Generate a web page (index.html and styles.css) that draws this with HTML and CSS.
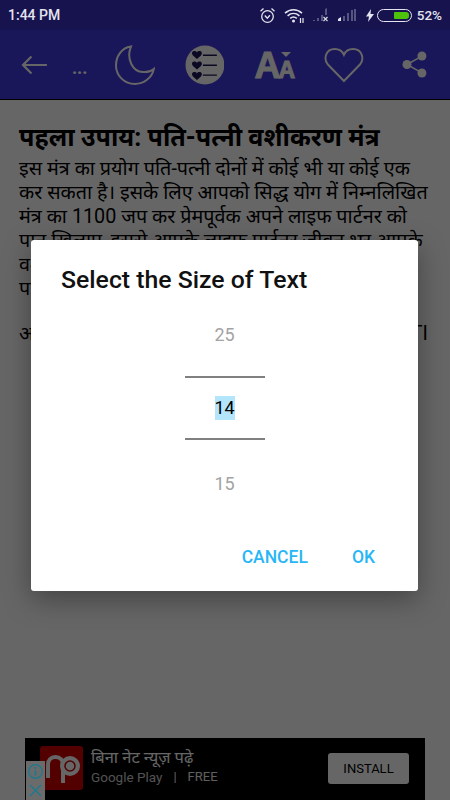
FILE: index.html
```html
<!DOCTYPE html>
<html lang="hi">
<head>
    <meta charset="UTF-8">
    <meta name="viewport" content="width=device-width, initial-scale=1.0">
    <title>Select the Size of Text</title>
    <link rel="stylesheet" href="styles.css">
</head>
<body>
    <div class="screen">
        <div class="status-bar">
            <span class="status-time">1:44 PM</span>
            <div class="status-icons">
                <svg class="icon-alarm" width="17" height="17" viewBox="0 0 17 17" fill="none" stroke="#e4e4ee" stroke-width="1.3">
                    <circle cx="8.5" cy="9.5" r="5.8"/>
                    <path d="M5.8 8.5l2.5 2.8 2.6-3M1.5 4.2L4.5 1.6M15.5 4.2l-3-2.6"/>
                </svg>
                <svg class="icon-wifi" width="21" height="15" viewBox="0 0 21 15" fill="none" stroke="#e4e4ee" stroke-width="1.6">
                    <path d="M1 5.2c5-4.6 12-4.6 17 0M3.6 7.8c3.500-3 8.300-3 11.800 0M6.200 10.300c2-1.600 4.600-1.600 6.600 0"/>
                    <circle cx="9.500" cy="13" r="1.500" fill="#e4e4ee" stroke="none"/>
                    <path d="M16.500 10v5M19 10v5" stroke-width="1.200"/>
                </svg>
                <svg class="icon-signal" width="18" height="14" viewBox="0 0 18 14">
                    <path d="M1 12h2v1H1zM5 10h2v3H5zM9 7h2v6H9zM13 1l2-1v7h-2z" fill="#55557f"/>
                    <path d="M11.500 9l4 4M15.500 9l-4 4" stroke="#d8d8e4" stroke-width="1.200"/>
                </svg>
                <svg class="icon-signal-two" width="20" height="14" viewBox="0 0 20 14">
                    <path d="M1 11l3-2v4H1z" fill="#e4e4ee"/>
                    <path d="M6 8h2v5H6zM10 5h2v8h-2zM14 2h2v11h-2zM17 1h2v12h-2z" fill="#55557f"/>
                </svg>
                <svg class="icon-bolt" width="8" height="13" viewBox="0 0 8 13">
                    <path d="M5 0L0 7.500h3L2 13l6-8H4.500z" fill="#e4e4ee"/>
                </svg>
                <div class="battery"><div class="battery-level"></div></div>
                <span class="status-percent">52%</span>
            </div>
        </div>

        <div class="toolbar">
            <svg width="30" height="24" viewBox="0 0 30 24" fill="none" stroke="#fff" stroke-width="2.200">
                <path d="M27 12H3M11.500 3.500L3 12l8.500 8.500"/>
            </svg>
            <span class="toolbar-dots">...</span>
            <svg class="icon-moon" width="40" height="40" viewBox="0 0 40 40" fill="none" stroke="#fff" stroke-width="2">
                <path d="M16 1.500C6 3 1 12 1 20.500 1 31 9.500 39 20 39c9 0 17-6 19-15-3 2.500-7 3.500-11 3C18 27 11 14 16 1.500z"/>
            </svg>
            <svg class="icon-list" width="40" height="40" viewBox="0 0 40 40">
                <circle cx="20" cy="20" r="19.500" fill="#fff"/>
                <g fill="#1a1656">
                    <path d="M12 14L8 10.500C6 8 7.500 6 9.500 6c1 0 2 .5 2.500 1.500C12.500 6.500 13.500 6 14.500 6c2 0 3.500 2 1.500 4.500z"/>
                    <path d="M12 24.500L8 21c-2-2.500-.5-4.500 1.500-4.500 1 0 2 .5 2.500 1.500.5-1 1.500-1.500 2.500-1.500 2 0 3.500 2 1.500 4.500z"/>
                    <path d="M12 35L8 31.500c-2-2.500-.5-4.500 1.500-4.500 1 0 2 .5 2.500 1.500.5-1 1.500-1.500 2.500-1.500 2 0 3.500 2 1.500 4.500z"/>
                    <path d="M18 9.500h14v1.400H18zM18 19.500h14v1.400H18zM18 29.500h14v1.400H18z"/>
                </g>
            </svg>
            <div class="icon-text-size">
                <span class="size-big">A</span><span class="size-small">A</span>
                <span class="size-arrow"></span>
            </div>
            <svg class="icon-heart" width="40" height="36" viewBox="0 0 41 37" fill="none" stroke="#fff" stroke-width="2">
                <path d="M20.500 35L4 18C-1 12 2 2 11 2c4.500 0 8 2.500 9.500 6C22 4.500 25.500 2 30 2c9 0 12 10 7 16z"/>
            </svg>
            <svg class="icon-share" width="25" height="27" viewBox="0 0 25 27" fill="#fff">
                <circle cx="20" cy="5" r="4.500"/>
                <circle cx="5" cy="13.500" r="4.500"/>
                <circle cx="20" cy="22" r="4.500"/>
                <path d="M5 13.500L20 5M5 13.500L20 22" stroke="#fff" stroke-width="1.500"/>
            </svg>
        </div>

        <div class="content">
            <h2 class="article-title">पहला उपाय: पति-पत्नी वशीकरण मंत्र</h2>
            <p class="article-text">इस मंत्र का प्रयोग पति-पत्नी दोनों में कोई भी या कोई एक<br>
            कर सकता है। इसके लिए आपको सिद्ध योग में निम्नलिखित<br>
            मंत्र का 1100 जप कर प्रेमपूर्वक अपने लाइफ पार्टनर को<br>
            पान खिलाए, इससे आपके लाइफ पार्टनर जीवन भर आपके<br>
            वश में रहेंगे और आपका वैवाहिक जीवन सुखी रहेगा और<br>
            पति-पत्नी में प्रेम बना रहेगा।</p>
            <p class="article-note"><span>अगर आप यह उपाय करना चाहते हैं</span><span>ARTI</span></p>
        </div>

        <div class="ad-banner">
            <svg class="ad-logo" width="43" height="44" viewBox="0 0 43 44">
                <rect width="43" height="44" rx="3" fill="#cc0000"/>
                <path d="M8 32V19c0-5 3-8 7.500-8S23 14 23 19v18" fill="none" stroke="#fff" stroke-width="4"/>
                <circle cx="30" cy="20" r="10" fill="#fff"/>
                <circle cx="30" cy="20" r="5" fill="none" stroke="#cc0000" stroke-width="1.500"/>
            </svg>
            <div class="ad-info">
                <div class="ad-title">बिना नेट न्यूज़ पढ़े</div>
                <div class="ad-store">
                    <span class="ad-play">Google Play</span>
                    <span class="ad-sep">|</span>
                    <span>FREE</span>
                </div>
            </div>
            <div class="ad-install">INSTALL</div>
        </div>

        <div class="scrim">
            <div class="dialog">
                <div class="dialog-title">Select the Size of Text</div>
                <div class="picker">
                    <div class="picker-item">25</div>
                    <div class="picker-current"><span class="picker-selected">14</span></div>
                    <div class="picker-item">15</div>
                </div>
                <div class="dialog-actions">
                    <span class="dialog-btn">CANCEL</span>
                    <span class="dialog-btn">OK</span>
                </div>
            </div>
        </div>

        <div class="ad-choices">
            <svg width="17" height="17" viewBox="0 0 17 17" fill="none" stroke="#1a7a90" stroke-width="1.300">
                <circle cx="8.500" cy="8.500" r="6.800"/>
                <path d="M8.500 7.500v5M8.500 4.200v1.800" stroke-width="1.800"/>
            </svg>
            <svg width="15" height="15" viewBox="0 0 15 15" fill="none" stroke="#1a7a90" stroke-width="1.400">
                <path d="M2 2l11 11M13 2L2 13"/>
            </svg>
        </div>
    </div>
</body>
</html>
```

FILE: styles.css
```css
* {
    box-sizing: border-box;
}

body {
    margin: 0;
    font-family: Roboto, "Noto Sans", sans-serif;
    background-color: #fff;
}

.screen {
    position: relative;
    width: 450px;
    height: 800px;
    overflow: hidden;
    display: flex;
    flex-direction: column;
}

.status-bar {
    height: 30px;
    flex-shrink: 0;
    padding: 0 8px;
    display: flex;
    align-items: center;
    justify-content: space-between;
    background-color: #17134f;
    color: #e4e4ee;
}

.status-time {
    font-size: 14px;
    font-weight: 500;
}

.status-icons {
    display: flex;
    align-items: center;
}

.status-percent {
    font-size: 13.5px;
    font-weight: 500;
    margin-left: 5px;
}

.icon-wifi {
    margin-left: 8px;
}

.icon-signal {
    margin-left: 7px;
}

.icon-signal-two {
    margin-left: 7px;
}

.icon-bolt {
    margin-left: 9px;
}

.battery {
    width: 35px;
    height: 13px;
    margin-left: 3px;
    padding: 2px;
    display: flex;
    justify-content: flex-end;
    border: 1.5px solid #e4e4ee;
    border-radius: 7px;
}

.battery-level {
    width: 15px;
    background-color: #4cc20a;
    border-radius: 1px 3px 3px 1px;
}

.toolbar {
    height: 70px;
    flex-shrink: 0;
    position: relative;
    display: flex;
    align-items: center;
    padding: 0 23px 0 20px;
    background-color: #4138e0;
    border-bottom: 1px solid #000;
}

.toolbar-dots {
    width: 43px;
    margin: 6px 0 0 22px;
    font-size: 18px;
    font-weight: 700;
    color: #fff;
}

.icon-list {
    margin-left: 30px;
}

.icon-text-size {
    position: relative;
    width: 40px;
    height: 40px;
    margin-left: 30px;
    font-family: "Liberation Sans", sans-serif;
    font-weight: 700;
    color: #fff;
    white-space: nowrap;
    -webkit-text-stroke: 1px #fff;
}

.size-big {
    position: absolute;
    left: 0;
    bottom: 1px;
    font-size: 36px;
    line-height: 36px;
}

.size-small {
    position: absolute;
    left: 24px;
    bottom: 3px;
    font-size: 23px;
    line-height: 23px;
}

.size-arrow {
    position: absolute;
    left: 27px;
    top: 7px;
    border-left: 5px solid transparent;
    border-right: 5px solid transparent;
    border-top: 5px solid #fff;
}

.icon-heart {
    margin-left: 30px;
}

.icon-share {
    margin-left: 38px;
}

.content {
    flex: 1;
    padding: 24px 19px 0;
    color: #000;
}

.article-title {
    margin: 0;
    font-size: 25.1px;
    line-height: 28px;
    font-weight: 700;
    white-space: nowrap;
}

.article-text {
    margin: 5px 0 0;
    font-size: 19.8px;
    line-height: 24px;
    white-space: nowrap;
}

.article-note {
    margin: 21px 3px 0 0;
    font-size: 19.8px;
    line-height: 24px;
    white-space: nowrap;
    display: flex;
    justify-content: space-between;
}

.ad-banner {
    width: 400px;
    height: 62px;
    flex-shrink: 0;
    margin-left: 25px;
    padding: 8px 16px 0 15px;
    display: flex;
    align-items: flex-start;
    background-color: #000;
}

.ad-logo {
    flex-shrink: 0;
}

.ad-info {
    flex: 1;
    margin-left: 8px;
}

.ad-title {
    margin-top: 2px;
    font-size: 16.5px;
    line-height: 20px;
    color: #fff;
}

.ad-store {
    display: flex;
    align-items: center;
    gap: 11px;
    font-size: 13px;
    line-height: 18px;
    color: #eee;
}

.ad-play {
    font-size: 13.5px;
    color: #ccc;
}

.ad-install {
    width: 81px;
    height: 31px;
    margin-top: 7px;
    display: flex;
    align-items: center;
    justify-content: center;
    background-color: #fff;
    border-radius: 3px;
    font-size: 13px;
    color: #000;
}

/* not dimmed like the rest of the ad, so it sits over the scrim */
.ad-choices {
    position: absolute;
    left: 26px;
    bottom: 0;
    width: 19px;
    height: 39px;
    padding-top: 2px;
    display: flex;
    flex-direction: column;
    align-items: center;
    gap: 3px;
    background-color: #6b6b6b;
}

.scrim {
    position: absolute;
    top: 30px;
    left: 0;
    right: 1px;
    bottom: 0;
    display: flex;
    align-items: center;
    justify-content: center;
}

/* the dim layer has to reach the last pixel column too */
.scrim::before {
    content: "";
    position: absolute;
    top: 0;
    left: 0;
    right: -1px;
    bottom: 0;
    background-color: rgba(0, 0, 0, 0.6);
}

.dialog {
    position: relative;
    width: 387px;
    height: 351px;
    display: flex;
    flex-direction: column;
    background-color: #fff;
    border-radius: 3px;
    box-shadow: 0 8px 28px rgba(0, 0, 0, 0.35);
}

.dialog-title {
    padding: 24px 30px 0;
    font-size: 24.8px;
    line-height: 32px;
    font-weight: 500;
    color: #111;
}

.picker {
    width: 80px;
    margin: 20px auto 0;
    text-align: center;
    font-size: 18px;
}

.picker-item {
    height: 60px;
    line-height: 38px;
    color: #a3a3a3;
}

.picker-item:last-child {
    padding-top: 25px;
}

.picker-current {
    height: 64px;
    display: flex;
    align-items: center;
    justify-content: center;
    border-top: 2px solid #808080;
    border-bottom: 2px solid #808080;
    color: #000;
}

.picker-selected {
    width: 20px;
    height: 24px;
    line-height: 24px;
    background-color: #b3e5fc;
}

.dialog-actions {
    margin-top: auto;
    padding: 0 43px 23px 0;
    display: flex;
    justify-content: flex-end;
    gap: 44px;
}

.dialog-btn {
    font-size: 17.5px;
    line-height: 22px;
    font-weight: 500;
    color: #29b6f6;
}
```
